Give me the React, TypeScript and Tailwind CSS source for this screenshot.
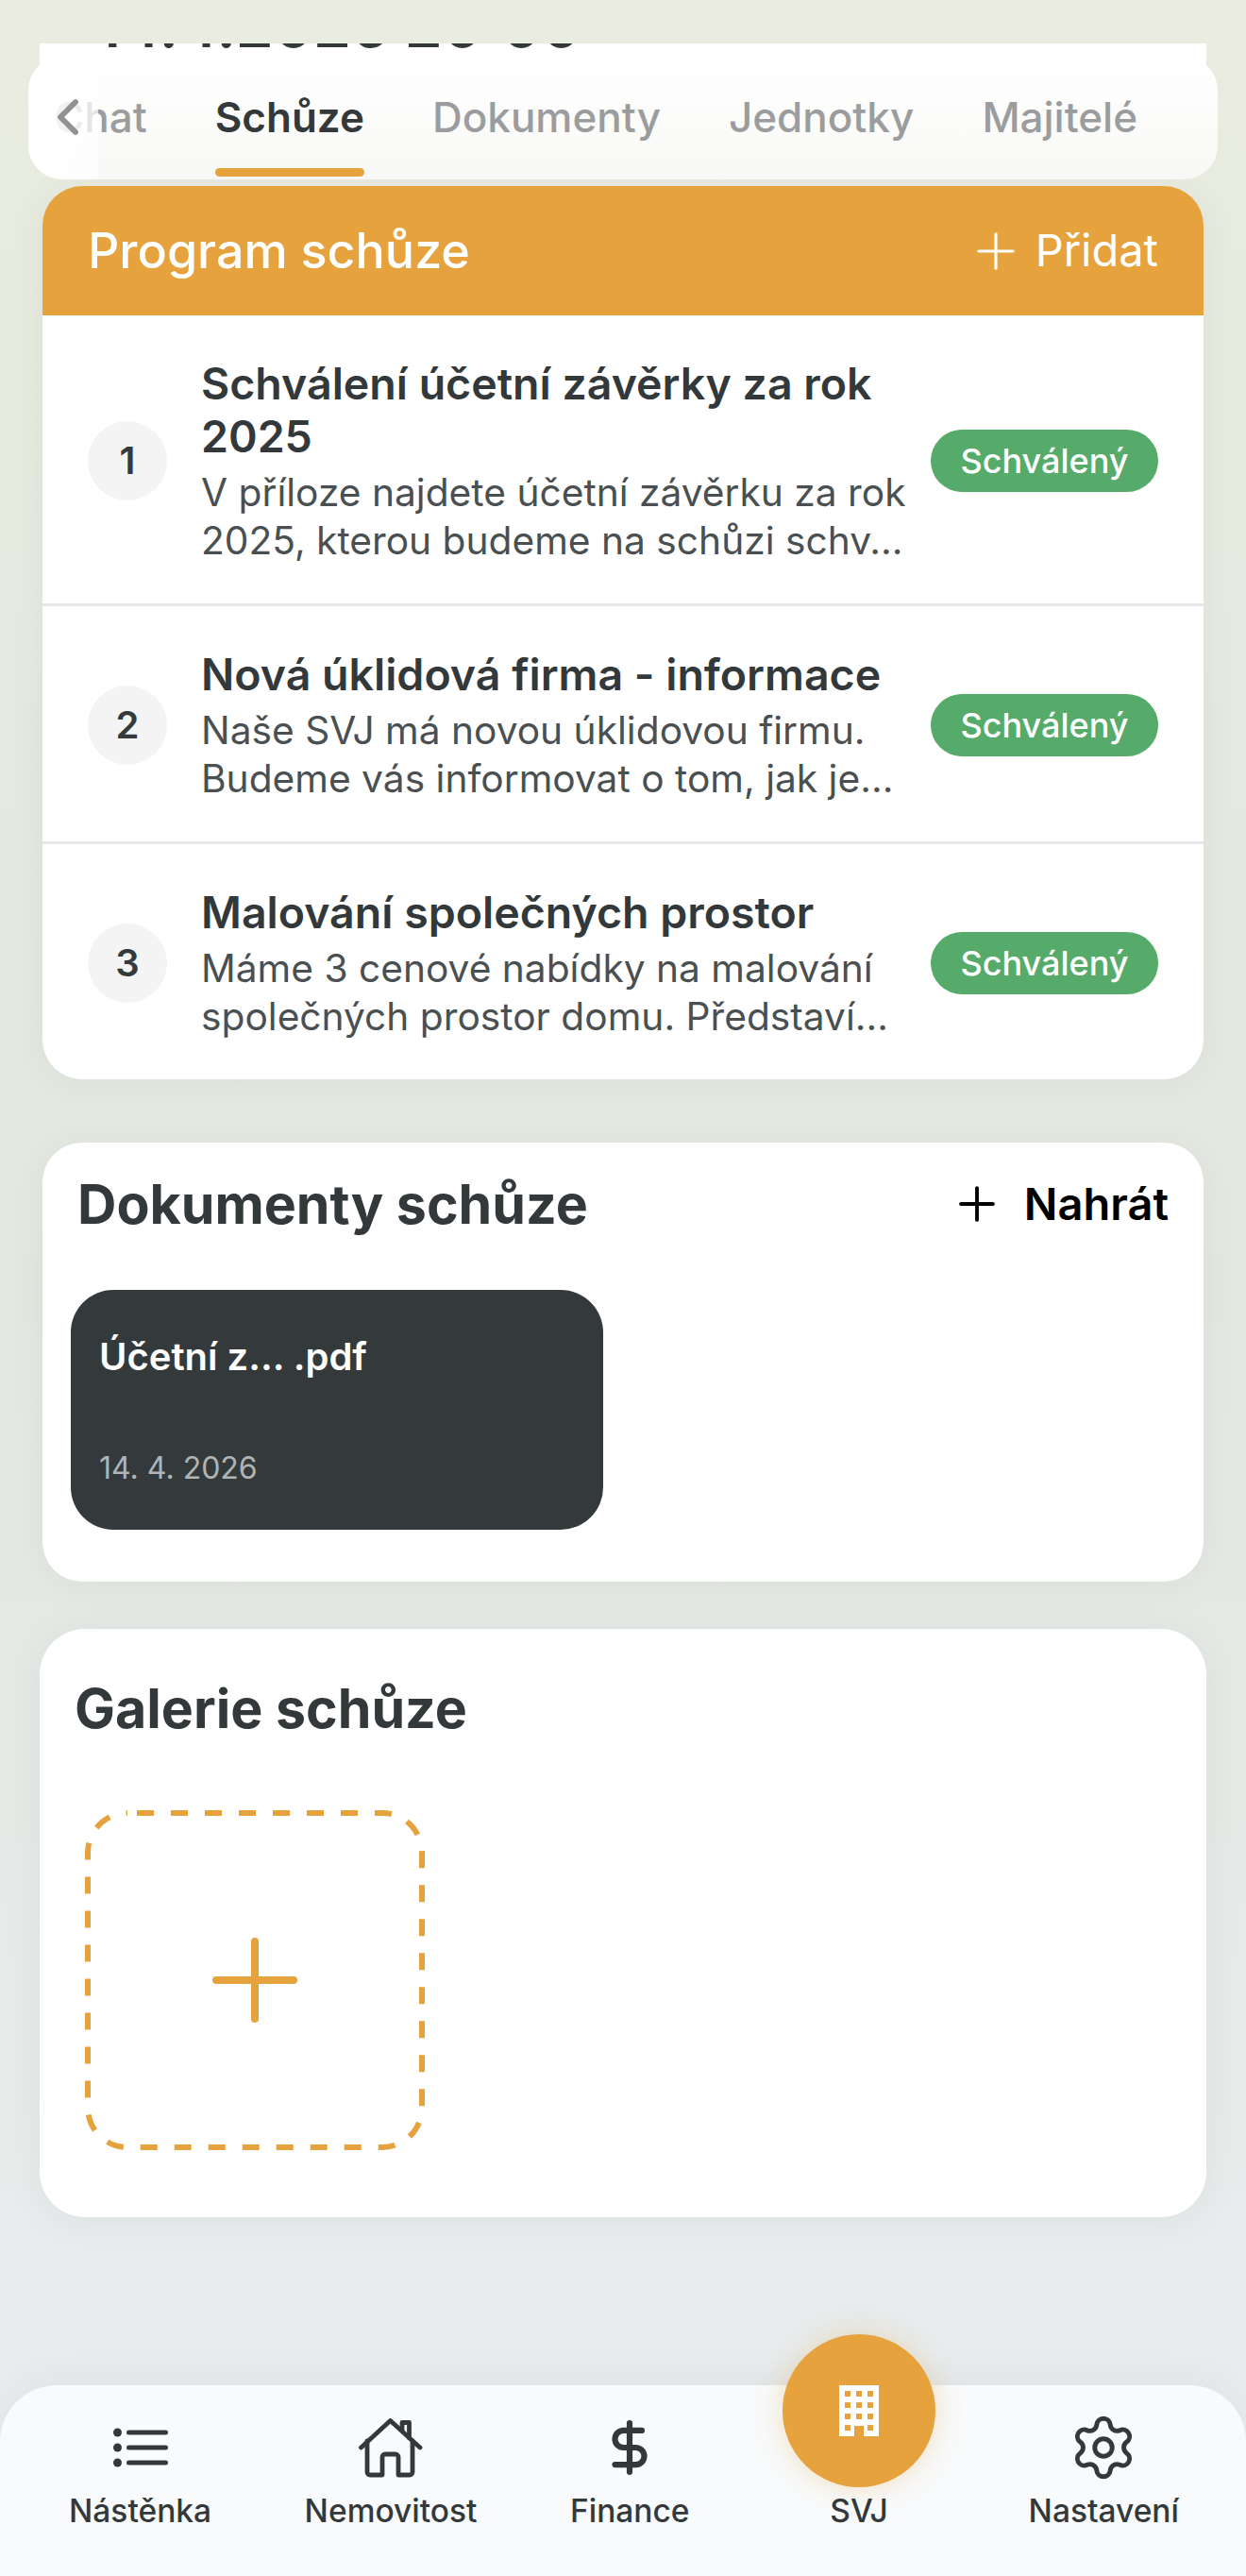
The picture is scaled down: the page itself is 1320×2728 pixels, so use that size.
import { ChevronLeft, DollarSign, Plus, Settings } from "lucide-react";

const font = "font-['Inter','Liberation_Sans',sans-serif]";

const agenda = [
  {
    n: 1,
    title: "Schválení účetní závěrky za rok 2025",
    lines: ["V příloze najdete účetní závěrku za rok", "2025, kterou budeme na schůzi schv..."],
  },
  {
    n: 2,
    title: "Nová úklidová firma - informace",
    lines: ["Naše SVJ má novou úklidovou firmu.", "Budeme vás informovat o tom, jak je..."],
  },
  {
    n: 3,
    title: "Malování společných prostor",
    lines: ["Máme 3 cenové nabídky na malování", "společných prostor domu. Představí..."],
  },
];

const tabs = ["Chat", "Schůze", "Dokumenty", "Jednotky", "Majitelé"];

function AgendaRow({ n, title, lines, last }: { n: number; title: string; lines: string[]; last: boolean }) {
  return (
    <div className={`flex items-center bg-white pb-[41px] pl-[48px] pr-[48px] pt-[44px] ${last ? "" : "border-b-[3px] border-[#e6e7e8]"}`}>
      <div className="flex h-[84px] w-[84px] shrink-0 items-center justify-center rounded-full bg-[#f4f4f5] text-[40px] font-semibold text-[#343a3c]">
        {n}
      </div>
      <div className="ml-[36px] min-w-0 flex-1 pr-[8px]">
        <div className="text-[46.5px] font-semibold leading-[56px] text-[#33393b]">{title}</div>
        <div className="mt-[6px] text-[40.7px] leading-[51px] text-[#4a5052]">
          {lines.map((l) => (
            <div key={l} className="whitespace-nowrap">
              {l}
            </div>
          ))}
        </div>
      </div>
      <div className="flex h-[66px] w-[241px] shrink-0 items-center justify-center rounded-full bg-[#56ab6a] text-[36px] font-medium text-white">
        Schválený
      </div>
    </div>
  );
}

function NavItem({ icon, label }: { icon: React.ReactNode; label: string }) {
  return (
    <div className="flex flex-col items-center">
      <div className="flex h-[72px] items-center justify-center text-[#33393b]">{icon}</div>
      <div className="mt-[11px] text-[33.5px] font-medium leading-[40px] text-[#33393b]">{label}</div>
    </div>
  );
}

function ListIcon() {
  return (
    <svg width="58" height="42" viewBox="0 0 58 42" fill="none" stroke="currentColor" strokeWidth="5" strokeLinecap="round">
      <circle cx="4.5" cy="5" r="4.5" fill="currentColor" stroke="none" />
      <circle cx="4.5" cy="21" r="4.5" fill="currentColor" stroke="none" />
      <circle cx="4.5" cy="37" r="4.5" fill="currentColor" stroke="none" />
      <path d="M16.5 5H55.5M16.5 21H55.5M16.5 37H55.5" />
    </svg>
  );
}

function HomeIcon() {
  return (
    <svg width="68" height="63" viewBox="0 0 68 63" fill="none" stroke="currentColor" strokeWidth="4.8" strokeLinecap="round" strokeLinejoin="round">
      <path d="M2.5 31L33.5 2.5L65 31" />
      <path d="M9 24V57a3 3 0 0 0 3 3H25V41a3 3 0 0 1 3-3H39a3 3 0 0 1 3 3V60H54a3 3 0 0 0 3-3V24" />
      <path d="M46 13V4.5H53.5V21" />
    </svg>
  );
}

function BuildingIcon() {
  return (
    <svg width="42" height="54" viewBox="0 0 42 54">
      <path
        fill="#fff"
        fillRule="evenodd"
        d="M0 0H42V54H26V43H16V54H0ZM6 6V12H12V6ZM18 6V12H24V6ZM30 6V12H36V6ZM6 18V24H12V18ZM18 18V24H24V18ZM30 18V24H36V18ZM6 30V36H12V30ZM18 30V36H24V30ZM30 30V36H36V30ZM6 42V48H12V42ZM30 42V48H36V42Z"
      />
    </svg>
  );
}

export default function App() {
  return (
    <div className={`${font} relative h-[2728px] w-[1320px] overflow-hidden bg-gradient-to-b from-[#e9ecdf] via-[#e3e8e1] to-[#e9edf0]`}>
      <div className="px-[42px] pt-[46px]">
        <div className="h-[100px] overflow-hidden bg-white pl-[59px]">
          <div className="-mt-[57px] text-[64px] font-semibold leading-[76px] text-[#33393b]">14.4.2026 20:00</div>
        </div>
      </div>

      {/* sticky tabs, sit over the top of the scroll content */}
      <div className="absolute left-[30px] top-[60px] flex h-[130px] w-[1260px] items-end rounded-[36px] bg-gradient-to-b from-white to-[#f8f9f6] pl-[27px]">
        <div className="flex gap-[72px]">
          {tabs.map((t) => (
            <div key={t} className={`relative pb-[34px] text-[44px] leading-[64px] ${t === "Schůze" ? "font-semibold text-[#33393b]" : "font-medium text-[#9a9c9d]"}`}>
              {t}
              {t === "Schůze" && <div className="absolute bottom-[3px] left-0 right-0 h-[9px] rounded-full bg-[#e6a23c]" />}
            </div>
          ))}
        </div>
        <div className="absolute bottom-0 left-0 top-0 w-[74px] rounded-l-[36px] bg-gradient-to-r from-white to-white/70" />
        <ChevronLeft className="absolute left-[10px] top-[32px] text-[#8f9192]" size={64} strokeWidth={2.2} />
      </div>

      <div className="mx-[45px] mt-[51px] overflow-hidden rounded-[42px] shadow-[0_4px_40px_rgba(0,0,0,0.05)]">
        <div className="flex h-[137px] items-center justify-between bg-[#e6a23c] pl-[48px] pr-[48px] text-white">
          <div className="text-[52px] font-medium">Program schůze</div>
          <div className="flex items-center gap-[11px] text-[47px]">
            <Plus size={62} strokeWidth={1.2} />
            <span>Přidat</span>
          </div>
        </div>
        {agenda.map((a, i) => (
          <AgendaRow key={a.n} {...a} last={i === agenda.length - 1} />
        ))}
      </div>

      <div className="mx-[45px] mt-[67px] h-[465px] rounded-[42px] bg-white px-[30px] pt-[30px] shadow-[0_4px_40px_rgba(0,0,0,0.05)]">
        <div className="flex items-center justify-between pl-[7px] pr-[7px]">
          <div className="text-[57.3px] font-bold leading-[70px] text-[#33393b]">Dokumenty schůze</div>
          <div className="flex items-center gap-[21px] text-[47px] font-semibold text-black">
            <Plus size={58} strokeWidth={1.6} />
            <span>Nahrát</span>
          </div>
        </div>
        <div className="mt-[55px] flex h-[254px] w-[564px] flex-col justify-between rounded-[45px] bg-[#343a3c] px-[30px] pb-[45px] pt-[47px]">
          <div className="text-[40px] font-semibold leading-[48px] text-white">Účetní z... .pdf</div>
          <div className="text-[32px] leading-[40px] text-[#b0b4b5]">14. 4. 2026</div>
        </div>
      </div>

      <div className="mx-[42px] mt-[50px] h-[623px] rounded-[48px] bg-white px-[37px] pt-[49px] shadow-[0_4px_40px_rgba(0,0,0,0.05)]">
        <div className="text-[57.3px] font-bold leading-[70px] text-[#33393b]">Galerie schůze</div>
        <div className="ml-[11px] mt-[73px] flex h-[360px] w-[360px] items-center justify-center text-[#e6a23c]">
          <svg width="360" height="360" viewBox="0 0 360 360" fill="none" stroke="currentColor">
            <rect x="3" y="3" width="354" height="354" rx="42" strokeWidth="6" strokeDasharray="18 18" strokeDashoffset="-10" />
            <path d="M180 139V221M139 180H221" strokeWidth="8" strokeLinecap="round" />
          </svg>
        </div>
      </div>

      {/* bottom nav */}
      <div className="absolute bottom-0 left-0 right-0 flex h-[202px] items-start justify-between rounded-t-[60px] bg-[#f8fafb] pl-[73px] pr-[71px] pt-[30px] shadow-[0_-10px_40px_rgba(0,0,0,0.04)]">
        <NavItem icon={<ListIcon />} label="Nástěnka" />
        <NavItem icon={<HomeIcon />} label="Nemovitost" />
        <NavItem icon={<DollarSign size={62} strokeWidth={2.4} />} label="Finance" />
        <div className="-mt-[84px] flex w-[162px] flex-col items-center">
          <div className="flex h-[162px] w-[162px] items-center justify-center rounded-full bg-[#e6a23c] shadow-[0_0_30px_rgba(230,162,60,0.3)]">
            <BuildingIcon />
          </div>
          <div className="mt-[5px] text-[33.5px] font-medium leading-[40px] text-[#33393b]">SVJ</div>
        </div>
        <NavItem icon={<Settings size={74} strokeWidth={1.6} />} label="Nastavení" />
      </div>
    </div>
  );
}
